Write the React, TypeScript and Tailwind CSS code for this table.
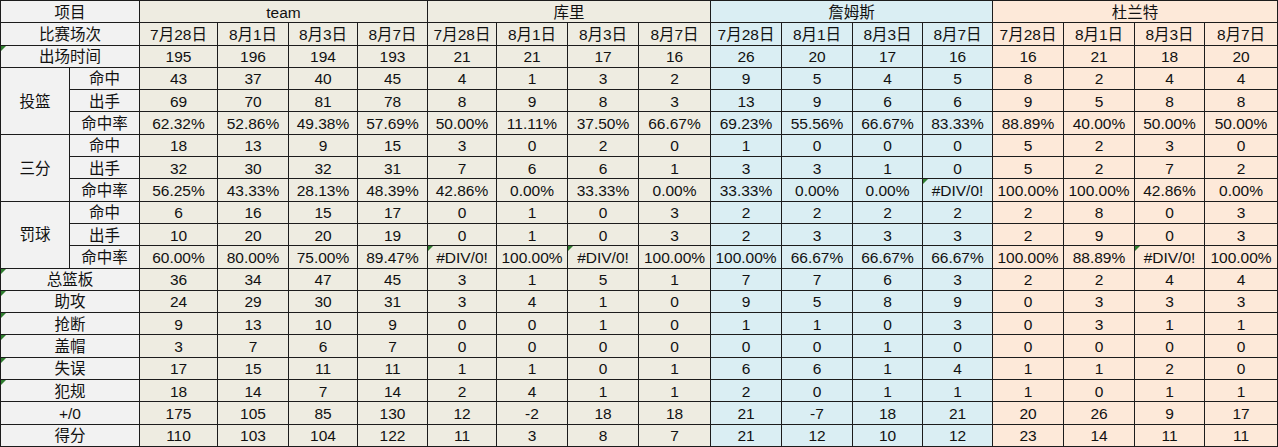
import React from "react";

const dates = ["7月28日", "8月1日", "8月3日", "8月7日"];
const players = [
  { name: "team", bg: "bg-[#eeece1]" },
  { name: "库里", bg: "bg-[#eeece1]" },
  { name: "詹姆斯", bg: "bg-[#daeef3]" },
  { name: "杜兰特", bg: "bg-[#fde9d9]" },
];

// 每行16个数: team / 库里 / 詹姆斯 / 杜兰特
type Row = { group?: string; label: string; sub?: boolean; vals: string[]; mark?: boolean };

const rows: Row[] = [
  { label: "出场时间", mark: true, vals: "195 196 194 193 21 21 17 16 26 20 17 16 16 21 18 20".split(" ") },
  { group: "投篮", label: "命中", sub: true, vals: "43 37 40 45 4 1 3 2 9 5 4 5 8 2 4 4".split(" ") },
  { label: "出手", sub: true, vals: "69 70 81 78 8 9 8 3 13 9 6 6 9 5 8 8".split(" ") },
  {
    label: "命中率",
    sub: true,
    vals: "62.32% 52.86% 49.38% 57.69% 50.00% 11.11% 37.50% 66.67% 69.23% 55.56% 66.67% 83.33% 88.89% 40.00% 50.00% 50.00%".split(" "),
  },
  { group: "三分", label: "命中", sub: true, vals: "18 13 9 15 3 0 2 0 1 0 0 0 5 2 3 0".split(" ") },
  { label: "出手", sub: true, vals: "32 30 32 31 7 6 6 1 3 3 1 0 5 2 7 2".split(" ") },
  {
    label: "命中率",
    sub: true,
    vals: "56.25% 43.33% 28.13% 48.39% 42.86% 0.00% 33.33% 0.00% 33.33% 0.00% 0.00% #DIV/0! 100.00% 100.00% 42.86% 0.00%".split(" "),
  },
  { group: "罚球", label: "命中", sub: true, vals: "6 16 15 17 0 1 0 3 2 2 2 2 2 8 0 3".split(" ") },
  { label: "出手", sub: true, vals: "10 20 20 19 0 1 0 3 2 3 3 3 2 9 0 3".split(" ") },
  {
    label: "命中率",
    sub: true,
    vals: "60.00% 80.00% 75.00% 89.47% #DIV/0! 100.00% #DIV/0! 100.00% 100.00% 66.67% 66.67% 66.67% 100.00% 88.89% #DIV/0! 100.00%".split(" "),
  },
  { label: "总篮板", mark: true, vals: "36 34 47 45 3 1 5 1 7 7 6 3 2 2 4 4".split(" ") },
  { label: "助攻", mark: true, vals: "24 29 30 31 3 4 1 0 9 5 8 9 0 3 3 3".split(" ") },
  { label: "抢断", mark: true, vals: "9 13 10 9 0 0 1 0 1 1 0 3 0 3 1 1".split(" ") },
  { label: "盖帽", mark: true, vals: "3 7 6 7 0 0 0 0 0 0 1 0 0 0 0 0".split(" ") },
  { label: "失误", mark: true, vals: "17 15 11 11 1 1 0 1 6 6 1 4 1 1 2 0".split(" ") },
  { label: "犯规", mark: true, vals: "18 14 7 14 2 4 1 1 2 0 1 1 1 0 1 1".split(" ") },
  { label: "+/0", vals: "175 105 85 130 12 -2 18 18 21 -7 18 21 20 26 9 17".split(" ") },
  { label: "得分", vals: "110 103 104 122 11 3 8 7 21 12 10 12 23 14 11 11".split(" ") },
];

const cell = "relative flex items-center justify-center pt-px border-r border-b border-[#1c1c1c] whitespace-nowrap";
const gray = "bg-[#f2f2f2]";

function Mark() {
  return <span className="absolute left-0 top-0 w-0 h-0 border-t-[5px] border-r-[5px] border-t-[#2f7d2f] border-r-transparent" />;
}

export default function App() {
  return (
    <div
      className="grid w-[1278px] h-[447px] grid-cols-[69px_70px_78px_71px_69px_70px_69px_71px_71px_72px_71px_71px_70px_70px_71px_71px_70px_73px] grid-rows-[repeat(20,22.3px)] border-l border-t border-[#1c1c1c] text-[15.5px] text-[#111] bg-white"
      style={{ fontFamily: '"Liberation Sans", "Noto Sans CJK SC", sans-serif' }}
    >
      <div className={`${cell} ${gray} col-span-2`}>项目</div>
      {players.map((p) => (
        <div key={p.name} className={`${cell} ${p.bg} col-span-4`}>
          {p.name}
        </div>
      ))}

      <div className={`${cell} ${gray} col-span-2`}>比赛场次</div>
      {players.map((p) =>
        dates.map((d) => (
          <div key={p.name + d} className={`${cell} ${p.bg}`}>
            {d}
          </div>
        ))
      )}

      {rows.map((r, ri) => (
        <React.Fragment key={ri}>
          {r.group && <div className={`${cell} ${gray} row-span-3`}>{r.group}</div>}
          <div className={`${cell} ${gray} ${r.sub ? "" : "col-span-2"}`}>
            {r.mark && <Mark />}
            {r.label}
          </div>
          {r.vals.map((v, vi) => (
            <div key={vi} className={`${cell} ${players[Math.floor(vi / 4)].bg}`}>
              {v === "#DIV/0!" && <Mark />}
              {v}
            </div>
          ))}
        </React.Fragment>
      ))}
    </div>
  );
}
